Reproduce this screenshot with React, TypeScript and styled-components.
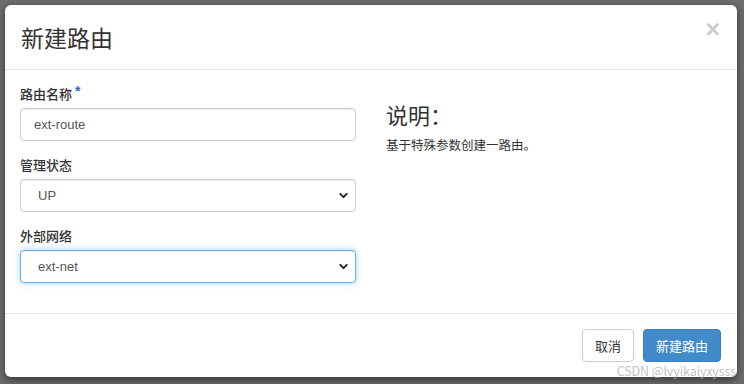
import React from 'react';
import styled, { createGlobalStyle } from 'styled-components';
import { ChevronDown } from 'lucide-react';

const GlobalStyle = createGlobalStyle`
  html, body {
    margin: 0;
    padding: 0;
    width: 744px;
    height: 384px;
    overflow: hidden;
  }
  body {
    font-family: "Liberation Sans", "Noto Sans CJK SC", sans-serif;
    font-size: 13px;
    color: #333;
  }
  * {
    box-sizing: border-box;
  }
`;

const Backdrop = styled.div`
  position: relative;
  width: 744px;
  height: 384px;
  background: #6d6d6d;
  padding: 5px 7px 7px 5px;
`;

const Modal = styled.div`
  background: #fff;
  border-radius: 6px;
  box-shadow: 0 3px 9px rgba(0, 0, 0, 0.5);
  display: flex;
  flex-direction: column;
  height: 372px;
`;

const Header = styled.div`
  display: flex;
  justify-content: space-between;
  align-items: flex-start;
  padding: 15px 16px 14px;
  border-bottom: 1px solid #e5e5e5;
  height: 65px;
`;

const Title = styled.h3`
  margin: 0;
  font-family: "Noto Sans CJK SC", sans-serif;
  font-size: 23px;
  font-weight: 400;
  line-height: 34px;
  color: #333;
`;

const Close = styled.button`
  border: 0;
  background: none;
  padding: 0;
  margin: -2px 1px 0 0;
  font-family: "Liberation Sans", sans-serif;
  font-size: 25px;
  font-weight: bold;
  line-height: 22px;
  color: #000;
  opacity: 0.2;
  cursor: pointer;
`;

const Body = styled.div`
  flex: 1;
  display: grid;
  grid-template-columns: 1fr 1fr;
  column-gap: 30px;
  padding: 15px;
  border-bottom: 1px solid #e5e5e5;
`;

const Column = styled.div`
  display: flex;
  flex-direction: column;
  gap: 15px;
`;

const FormGroup = styled.div`
  display: flex;
  flex-direction: column;
  gap: 5px;
`;

const Label = styled.label`
  font-family: "Noto Sans CJK SC", sans-serif;
  font-size: 13px;
  line-height: 18px;
  font-weight: 500;
  color: #333;
  display: flex;
  align-items: flex-start;
  gap: 3px;
`;

const Required = styled.span`
  color: #2a6fb8;
  font-family: "Liberation Sans", sans-serif;
  font-size: 14px;
  font-weight: bold;
  line-height: 12px;
`;

const TextInput = styled.input`
  height: 33px;
  width: 100%;
  padding: 6px 13px;
  font-family: "Liberation Sans", sans-serif;
  font-size: 13px;
  color: #555;
  background: #fff;
  border: 1px solid #ccc;
  border-radius: 4px;
  box-shadow: inset 0 1px 1px rgba(0, 0, 0, 0.075);
  outline: none;
`;

const SelectWrap = styled.div`
  position: relative;
`;

const Select = styled.select<{ $focused?: boolean }>`
  appearance: none;
  height: 33px;
  width: 100%;
  padding: 6px 17px;
  font-family: "Liberation Sans", sans-serif;
  font-size: 13px;
  color: #555;
  background: #fff;
  border: 1px solid ${(p) => (p.$focused ? '#66afe9' : '#ccc')};
  border-radius: 4px;
  box-shadow: ${(p) =>
    p.$focused
      ? 'inset 0 1px 1px rgba(0,0,0,.075), 0 0 7px rgba(102,175,233,.6)'
      : 'inset 0 1px 1px rgba(0,0,0,.075)'};
  outline: none;
`;

const Arrow = styled.span`
  position: absolute;
  right: 6px;
  top: 10px;
  display: flex;
  color: #222;
  pointer-events: none;
`;

const HelpTitle = styled.h3`
  margin: 14px 0 0;
  font-family: "Noto Sans CJK SC", sans-serif;
  font-size: 22px;
  font-weight: 400;
  line-height: 30px;
  color: #333;
`;

const HelpText = styled.p`
  margin: 7px 0 0;
  font-family: "Noto Sans CJK SC", sans-serif;
  font-size: 12.5px;
  line-height: 18px;
  color: #333;
`;

const Footer = styled.div`
  display: flex;
  justify-content: flex-end;
  gap: 9px;
  padding: 15px 16px 15px 15px;
`;

const Button = styled.button<{ $primary?: boolean }>`
  height: 33px;
  padding: 0 12px;
  font-family: "Noto Sans CJK SC", sans-serif;
  font-size: 13px;
  border-radius: 4px;
  cursor: pointer;
  color: ${(p) => (p.$primary ? '#fff' : '#333')};
  background: ${(p) => (p.$primary ? '#428bca' : '#fff')};
  border: 1px solid ${(p) => (p.$primary ? '#3b7fbd' : '#ccc')};
`;

const Watermark = styled.span`
  position: absolute;
  right: 8px;
  bottom: 4px;
  font-family: "Noto Sans CJK SC", sans-serif;
  font-size: 12.5px;
  color: rgba(170, 170, 170, 0.75);
  letter-spacing: -0.1px;
`;

const App = () => {
  return (
    <>
      <GlobalStyle />
      <Backdrop>
        <Modal>
          <Header>
            <Title>新建路由</Title>
            <Close aria-label="close">×</Close>
          </Header>
          <Body>
            <Column>
              <FormGroup>
                <Label>
                  路由名称 <Required>*</Required>
                </Label>
                <TextInput defaultValue="ext-route" />
              </FormGroup>
              <FormGroup>
                <Label>管理状态</Label>
                <SelectWrap>
                  <Select defaultValue="UP">
                    <option value="UP">UP</option>
                    <option value="DOWN">DOWN</option>
                  </Select>
                  <Arrow>
                    <ChevronDown size={13} strokeWidth={3.5} />
                  </Arrow>
                </SelectWrap>
              </FormGroup>
              <FormGroup>
                <Label>外部网络</Label>
                <SelectWrap>
                  <Select $focused defaultValue="ext-net">
                    <option value="ext-net">ext-net</option>
                  </Select>
                  <Arrow>
                    <ChevronDown size={13} strokeWidth={3.5} />
                  </Arrow>
                </SelectWrap>
              </FormGroup>
            </Column>
            <Column>
              <div>
                <HelpTitle>说明：</HelpTitle>
                <HelpText>基于特殊参数创建一路由。</HelpText>
              </div>
            </Column>
          </Body>
          <Footer>
            <Button>取消</Button>
            <Button $primary>新建路由</Button>
          </Footer>
        </Modal>
        <Watermark>CSDN @lvyikaiyxysss</Watermark>
      </Backdrop>
    </>
  );
};

export default App;
